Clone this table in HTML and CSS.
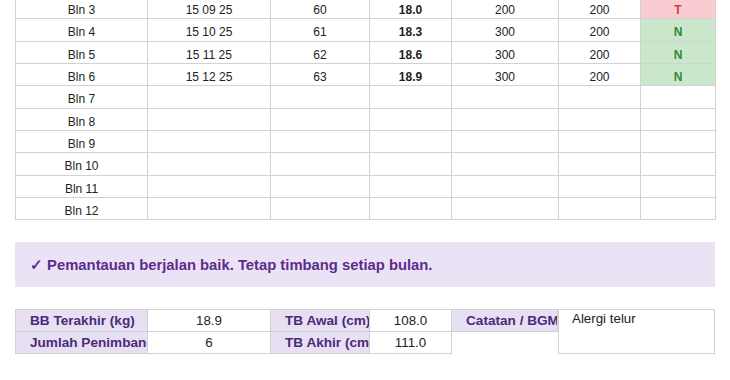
FILE: index.html
```html
<!DOCTYPE html>
<html lang="id">
<head>
<meta charset="utf-8">
<title>Pemantauan</title>
<link rel="stylesheet" href="styles.css">
</head>
<body>
<div class="page">
  <div class="sheet">
    <div class="c">Bln 3</div><div class="c">15 09 25</div><div class="c">60</div><div class="c b">18.0</div><div class="c">200</div><div class="c">200</div><div class="c st t">T</div>
    <div class="c">Bln 4</div><div class="c">15 10 25</div><div class="c">61</div><div class="c b">18.3</div><div class="c">300</div><div class="c">200</div><div class="c st n">N</div>
    <div class="c">Bln 5</div><div class="c">15 11 25</div><div class="c">62</div><div class="c b">18.6</div><div class="c">300</div><div class="c">200</div><div class="c st n">N</div>
    <div class="c">Bln 6</div><div class="c">15 12 25</div><div class="c">63</div><div class="c b">18.9</div><div class="c">300</div><div class="c">200</div><div class="c st n">N</div>
    <div class="c">Bln 7</div><div class="c"></div><div class="c"></div><div class="c"></div><div class="c"></div><div class="c"></div><div class="c"></div>
    <div class="c">Bln 8</div><div class="c"></div><div class="c"></div><div class="c"></div><div class="c"></div><div class="c"></div><div class="c"></div>
    <div class="c">Bln 9</div><div class="c"></div><div class="c"></div><div class="c"></div><div class="c"></div><div class="c"></div><div class="c"></div>
    <div class="c">Bln 10</div><div class="c"></div><div class="c"></div><div class="c"></div><div class="c"></div><div class="c"></div><div class="c"></div>
    <div class="c">Bln 11</div><div class="c"></div><div class="c"></div><div class="c"></div><div class="c"></div><div class="c"></div><div class="c"></div>
    <div class="c">Bln 12</div><div class="c"></div><div class="c"></div><div class="c"></div><div class="c"></div><div class="c"></div><div class="c"></div>
  </div>

  <div class="status">✓ Pemantauan berjalan baik. Tetap timbang setiap bulan.</div>

  <div class="summary">
    <div class="s lbl">BB Terakhir (kg)</div>
    <div class="s val">18.9</div>
    <div class="s lbl">TB Awal (cm)</div>
    <div class="s val">108.0</div>
    <div class="s lbl">Catatan / BGM</div>
    <div class="s note">Alergi telur</div>
    <div class="s lbl">Jumlah Penimbangan</div>
    <div class="s val">6</div>
    <div class="s lbl">TB Akhir (cm)</div>
    <div class="s val">111.0</div>
    <div class="s blank"></div>
  </div>
</div>
</body>
</html>
```

FILE: styles.css
```css
* { box-sizing: border-box; }

html, body {
  margin: 0;
  padding: 0;
  background: #ffffff;
}

.page {
  width: 730px;
  height: 380px;
  overflow: hidden;
  padding: 0 15px;
  font-family: "Liberation Sans", Arial, sans-serif;
}

.sheet {
  margin-top: -3px;
  display: grid;
  grid-template-columns: 132px 123px 99px 82px 107px 82px 75px;
  grid-auto-rows: 22.33px;
  border-left: 1px solid #d2d2d2;
  width: 700px;
}

.c {
  border-right: 1px solid #d2d2d2;
  border-bottom: 1px solid #d2d2d2;
  font-size: 12px;
  color: #222222;
  text-align: center;
  line-height: 16px;
  padding-top: 5px;
  white-space: nowrap;
  overflow: hidden;
}

.b { font-weight: bold; }

.st { font-weight: bold; }
.st.t { background: #f8ccd0; color: #d83a3a; }
.st.n { background: #c9e7cb; color: #2f8a33; }

.status {
  margin-top: 22px;
  height: 45px;
  background: #ebe3f5;
  color: #5a2d8c;
  font-weight: bold;
  font-size: 14.8px;
  display: flex;
  align-items: center;
  padding-left: 15px;
  width: 700px;
}

.summary {
  margin-top: 22px;
  display: grid;
  grid-template-columns: 133px 123px 99px 82px 106px 157px;
  grid-template-rows: 22.33px 22.33px;
  width: 700px;
}

.s {
  font-size: 13.33px;
  white-space: nowrap;
  overflow: hidden;
  display: flex;
  align-items: center;
  border-right: 1px solid #d2d2d2;
  border-bottom: 1px solid #d2d2d2;
  border-top: 1px solid #d2d2d2;
}

.summary .s:nth-child(n+7) { border-top: none; }

.lbl {
  background: #e6e0f2;
  color: #4b2a7a;
  font-weight: bold;
  font-size: 13.6px;
  padding-left: 14px;
}

.summary .lbl:nth-child(1),
.summary .lbl:nth-child(7) { border-left: 1px solid #d2d2d2; padding-left: 14px; }

.val {
  background: #ffffff;
  color: #222222;
  justify-content: center;
}

.note {
  grid-column: 6;
  grid-row: 1 / span 2;
  align-items: flex-start;
  padding: 1px 0 0 13px;
  color: #222222;
  border: 1px solid #d2d2d2;
}

.blank {
  grid-column: 5;
  grid-row: 2;
  border: none;
  background: #ffffff;
}
```
